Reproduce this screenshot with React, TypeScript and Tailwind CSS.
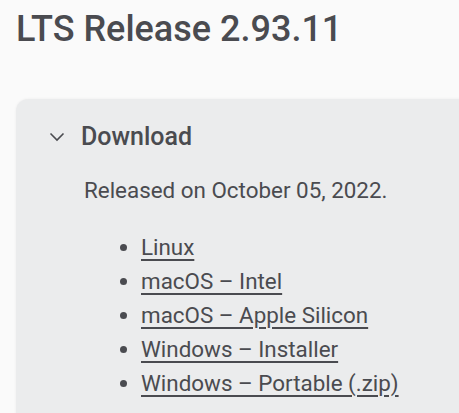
import React from "react";

const links = [
  "Linux",
  "macOS – Intel",
  "macOS – Apple Silicon",
  "Windows – Installer",
  "Windows – Portable (.zip)",
];

export default function App() {
  return (
    <div
      className="w-[459px] h-[413px] overflow-hidden bg-[#fafafa] text-[#4a4b50]"
      style={{ fontFamily: "Roboto, 'Noto Sans', sans-serif" }}
    >
      <div className="pl-4 pt-[5px]">
        <h1 className="text-[36px] leading-[48px] font-medium">LTS Release 2.93.11</h1>
      </div>
      <div className="ml-4 mt-[46px] w-[480px] h-[400px] rounded-l-[12px] bg-[#ebeced] shadow-[0_0_3px_rgba(0,0,0,0.06)]">
        <div className="flex items-center pt-[20px] pl-[33px]">
          <svg width="16" height="10" viewBox="0 0 16 10" className="mr-[16px]">
            <path d="M1.5 1.5 L8 8 L14.5 1.5" fill="none" stroke="#4a4b50" strokeWidth="1.6" />
          </svg>
          <span className="text-[25px] leading-[36px] font-medium">Download</span>
        </div>
        <p className="pl-[68px] mt-[20px] text-[22.4px] leading-[30px]">Released on October 05, 2022.</p>
        <ul className="list-disc pl-[125px] mt-[25px] text-[22.4px] leading-[34px]">
          {links.map((l) => (
            <li key={l}>
              <a href="#" className="underline underline-offset-[4px] decoration-[1.5px]">{l}</a>
            </li>
          ))}
        </ul>
      </div>
    </div>
  );
}
